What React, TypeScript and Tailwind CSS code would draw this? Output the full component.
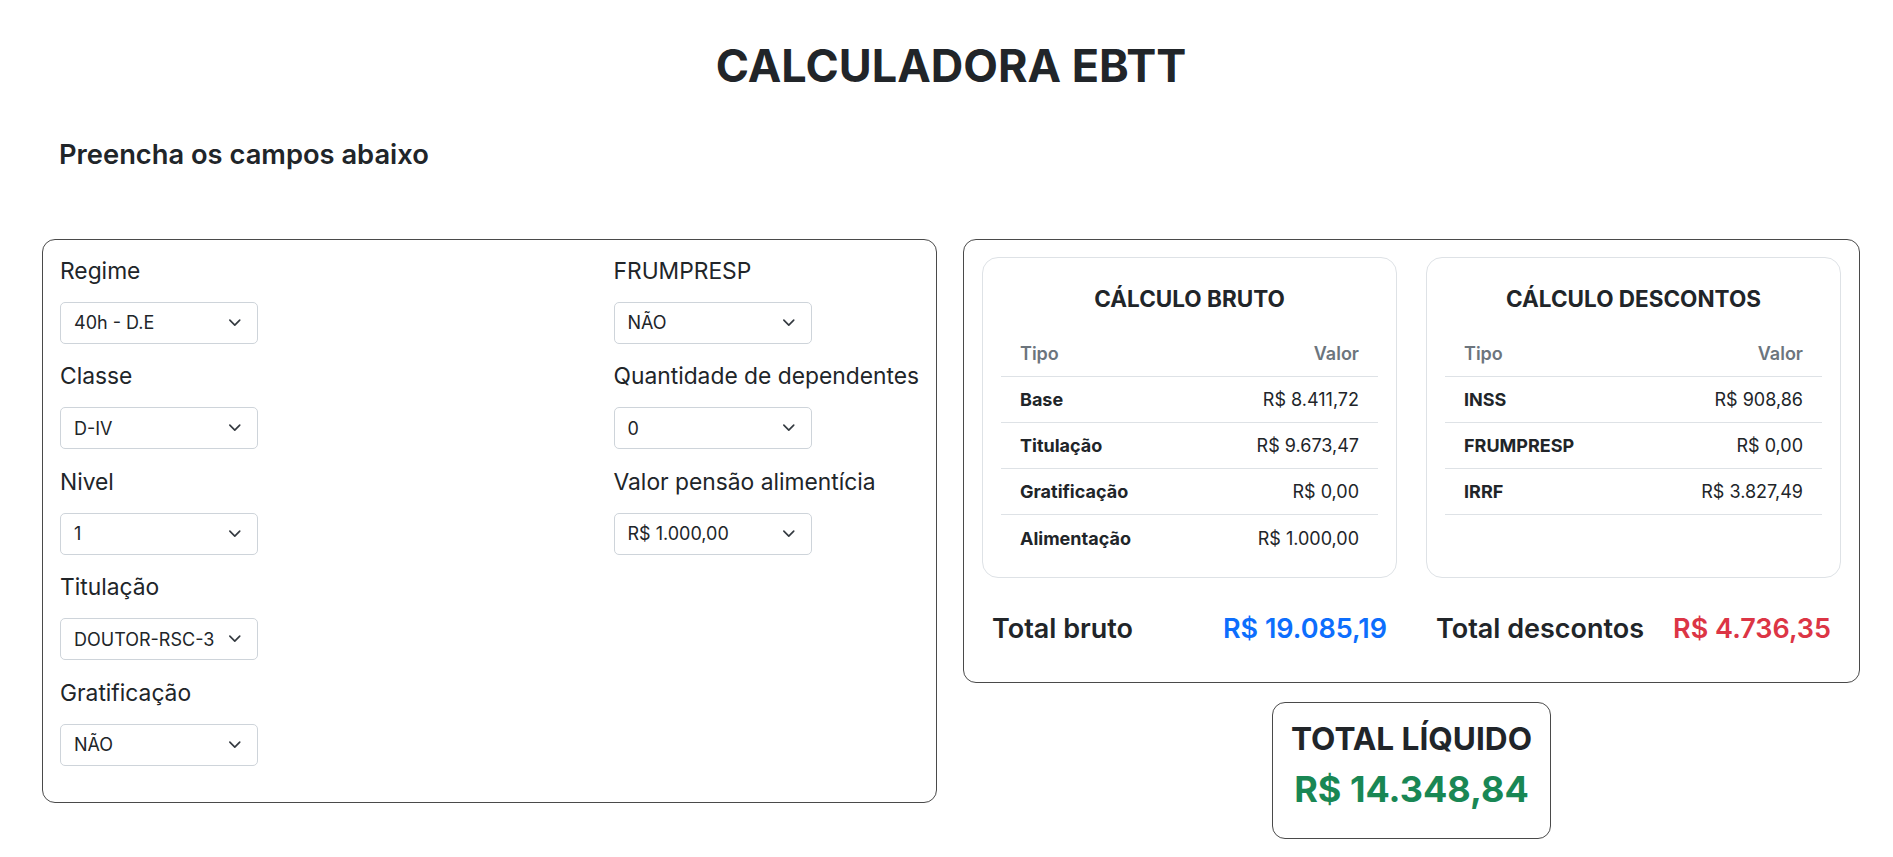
import React from 'react';

const leftFields = [
    { label: 'Regime', value: '40h - D.E' },
    { label: 'Classe', value: 'D-IV' },
    { label: 'Nivel', value: '1' },
    { label: 'Titulação', value: 'DOUTOR-RSC-3' },
    { label: 'Gratificação', value: 'NÃO' },
];

const rightFields = [
    { label: 'FRUMPRESP', value: 'NÃO' },
    { label: 'Quantidade de dependentes', value: '0' },
    { label: 'Valor pensão alimentícia', value: 'R$ 1.000,00' },
];

const bruto = [
    { tipo: 'Base', valor: 'R$ 8.411,72' },
    { tipo: 'Titulação', valor: 'R$ 9.673,47' },
    { tipo: 'Gratificação', valor: 'R$ 0,00' },
    { tipo: 'Alimentação', valor: 'R$ 1.000,00' },
];

const descontos = [
    { tipo: 'INSS', valor: 'R$ 908,86' },
    { tipo: 'FRUMPRESP', valor: 'R$ 0,00' },
    { tipo: 'IRRF', valor: 'R$ 3.827,49' },
];

function Select(props: { value: string }) {
    return (
        <div className="flex items-center h-[42px] w-[198px] border border-[#ced4da] rounded-[5px] bg-white pl-[13px] text-[18px] text-[#212529]">
            <span className="whitespace-nowrap">{props.value}</span>
            <svg className="ml-auto mr-[13px] w-[17.6px] h-[13.2px]" viewBox="0 0 16 16" fill="none">
                <path d="m2 5 6 6 6-6" stroke="#343a40" strokeWidth="2" strokeLinecap="round" strokeLinejoin="round" />
            </svg>
        </div>
    );
}

function Field(props: { label: string; value: string }) {
    return (
        <div className="flex flex-col mb-[15.5px]">
            <label className="text-[22.8px] leading-[33px] mb-[15px] whitespace-nowrap text-[#212529]">{props.label}</label>
            <Select value={props.value} />
        </div>
    );
}

function ResultTable(props: { title: string; rows: any[]; lastBorder: boolean }) {
    return (
        <div className="w-[415px] h-[321px] border border-[#dee2e6] rounded-[16px] pt-[28px]">
            <h5 className="text-center text-[22.5px] leading-[26.4px] font-bold text-[#212529] mb-[19.5px]">{props.title}</h5>
            <div className="mx-[18px]">
                <div className="flex items-center justify-between h-[46px] px-[19px] border-b border-[#dee2e6] text-[18px] font-semibold text-[#6c757d]">
                    <span>Tipo</span>
                    <span>Valor</span>
                </div>
                {props.rows.map((row: any, index: number) => (
                    <div
                        key={index}
                        className={`flex items-center justify-between h-[46px] px-[19px] text-[18px] text-[#212529] ${
                            index < props.rows.length - 1 || props.lastBorder ? 'border-b border-[#dee2e6]' : ''
                        }`}
                    >
                        <span className="font-bold">{row.tipo}</span>
                        <span>{row.valor}</span>
                    </div>
                ))}
            </div>
        </div>
    );
}

export default function App() {
    return (
        <main className="bg-white min-h-screen font-['Inter',sans-serif] text-[#212529]">
            <div className="ml-[42px] w-[1818px] pt-[40px]">
                <h1 className="text-center text-[45px] leading-[52.8px] font-bold">CALCULADORA EBTT</h1>
                <h4 className="mt-[46px] pl-[17px] text-[27.3px] leading-[31.7px] font-semibold">Preencha os campos abaixo</h4>

                <div className="flex items-start gap-[26px] mt-[68px]">
                    <div className="w-[895px] border border-[#4a4a4a] rounded-[13px] pt-[14px] px-[17px] pb-[21px] flex justify-between">
                        <div className="flex flex-col">
                            {leftFields.map((f) => (
                                <Field key={f.label} label={f.label} value={f.value} />
                            ))}
                        </div>
                        <div className="flex flex-col">
                            {rightFields.map((f) => (
                                <Field key={f.label} label={f.label} value={f.value} />
                            ))}
                        </div>
                    </div>

                    <div className="w-[897px] flex flex-col items-center">
                        <div className="w-full border border-[#4a4a4a] rounded-[13px] pt-[17px] px-[18px]">
                            <div className="flex gap-[29px]">
                                <ResultTable title="CÁLCULO BRUTO" rows={bruto} lastBorder={false} />
                                <ResultTable title="CÁLCULO DESCONTOS" rows={descontos} lastBorder={true} />
                            </div>
                            <div className="flex gap-[29px] h-[104px]">
                                <div className="w-[415px] flex items-center justify-between px-[10px] text-[27px] font-semibold">
                                    <span>Total bruto</span>
                                    <span className="text-[#0d6efd]">R$ 19.085,19</span>
                                </div>
                                <div className="w-[415px] flex items-center justify-between px-[10px] text-[27px] font-semibold">
                                    <span>Total descontos</span>
                                    <span className="text-[#dc3545]">R$ 4.736,35</span>
                                </div>
                            </div>
                        </div>

                        <div className="mt-[19px] border border-[#4a4a4a] rounded-[13px] px-[18px] pt-[17.6px] pb-[19px] text-center">
                            <h3 className="text-[31.6px] leading-[37px] font-bold mb-[11px]">TOTAL LÍQUIDO</h3>
                            <h2 className="text-[36px] leading-[42.2px] font-bold text-[#198754] mb-[8.8px]">R$ 14.348,84</h2>
                        </div>
                    </div>
                </div>
            </div>
        </main>
    );
}
